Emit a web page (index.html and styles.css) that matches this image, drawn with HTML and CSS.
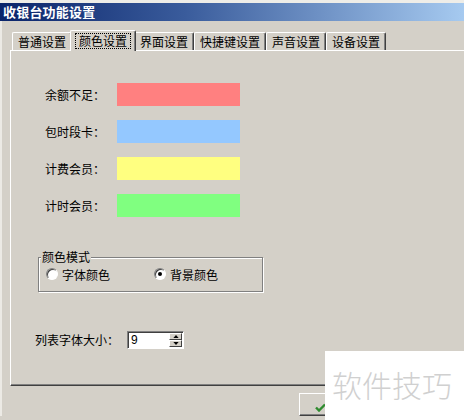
FILE: index.html
```html
<!DOCTYPE html>
<html>
<head>
<meta charset="utf-8">
<link rel="stylesheet" href="styles.css">
</head>
<body>
<div class="window">
  <div class="titlebar"><span class="title">收银台功能设置</span></div>
  <div class="client">
    <div class="tabs">
      <div class="tab">普通设置</div>
      <div class="tab active"><span class="focus">颜色设置</span></div>
      <div class="tab">界面设置</div>
      <div class="tab">快捷键设置</div>
      <div class="tab">声音设置</div>
      <div class="tab">设备设置</div>
    </div>
    <div class="panel">
      <div class="colors">
        <div class="crow"><span class="clabel">余额不足：</span><span class="swatch red"></span></div>
        <div class="crow"><span class="clabel">包时段卡：</span><span class="swatch blue"></span></div>
        <div class="crow"><span class="clabel">计费会员：</span><span class="swatch yellow"></span></div>
        <div class="crow"><span class="clabel">计时会员：</span><span class="swatch green"></span></div>
      </div>
      <div class="group">
        <span class="legend">颜色模式</span>
        <div class="radios">
          <label class="radio first"><span class="circle"></span><span>字体颜色</span></label>
          <label class="radio"><span class="circle checked"><span class="dot"></span></span><span>背景颜色</span></label>
        </div>
      </div>
      <div class="fontrow">
        <span class="flabel">列表字体大小：</span>
        <div class="spin">
          <span class="val">9</span>
          <div class="spinbtns">
            <span class="sbtn"><svg width="7" height="4" viewBox="0 0 7 4"><path d="M3.5 0 L7 4 L0 4 Z" fill="#000"/></svg></span>
            <span class="sbtn"><svg width="7" height="4" viewBox="0 0 7 4"><path d="M0 0 L7 0 L3.5 4 Z" fill="#000"/></svg></span>
          </div>
        </div>
      </div>
    </div>
    <div class="footer">
      <div class="btn">
        <svg class="check" width="11" height="9" viewBox="0 0 11 9"><path d="M1 4.5 L4 7.5 L10 1.5" fill="none" stroke="#2e8b2e" stroke-width="2.4"/></svg>
      </div>
    </div>
  </div>
</div>
<div class="watermark">软件技巧</div>
</body>
</html>
```

FILE: styles.css
```css
html, body {
  margin: 0;
  padding: 0;
}
body {
  width: 464px;
  height: 420px;
  overflow: hidden;
  background: #d4d0c8;
  font-family: "Noto Sans CJK SC", "Liberation Sans", sans-serif;
  font-size: 12px;
  color: #000;
  position: relative;
}
.window {
  border-top: 3px solid #eeede8;
  height: 417px;
}
.titlebar {
  height: 18px;
  background: linear-gradient(to right, #0a246a 0%, #3a5c9c 40%, #a6caf0 100%);
  display: flex;
  align-items: center;
  padding-left: 3px;
}
.title {
  color: #fff;
  font-weight: bold;
  font-size: 13px;
  line-height: 14px;
  letter-spacing: 0.2px;
}
.client {
  box-shadow: inset 2px 0 0 #eceae5;
}
.tabs {
  display: flex;
  padding: 11px 0 0 12px;
  height: 18px;
  position: relative;
  z-index: 2;
}
.tab {
  height: 18px;
  box-sizing: border-box;
  padding: 0 5px;
  border-top: 1px solid #fff;
  border-left: 1px solid #fff;
  border-right: 1px solid #404040;
  box-shadow: inset -1px 0 0 #808080;
  border-radius: 2px 2px 0 0;
  line-height: 16px;
  white-space: nowrap;
  display: flex;
  align-items: center;
}
.tab.active {
  height: 21px;
  margin: -2px -2px 0 -2px;
  padding: 0 4px 0 4px;
  background: #d4d0c8;
  position: relative;
  z-index: 3;
  align-items: flex-start;
  padding-top: 2px;
}
.focus {
  border: 1px dotted #000;
  padding: 0 3px;
  line-height: 14px;
}
.panel {
  margin-left: 10px;
  margin-right: -10px;
  height: 336px;
  box-sizing: border-box;
  border-top: 1px solid #fff;
  border-left: 1px solid #fff;
  border-bottom: 1px solid #404040;
  box-shadow: inset 0 -1px 0 #808080;
  padding: 32px 0 0 0;
}
.colors {
  display: flex;
  flex-direction: column;
  gap: 14px;
}
.crow {
  display: flex;
  align-items: center;
  height: 23px;
  padding-left: 34px;
}
.clabel {
  width: 72px;
  line-height: 14px;
}
.swatch {
  width: 123px;
  height: 23px;
  display: block;
}
.red { background: #ff8080; }
.blue { background: #94c8ff; }
.yellow { background: #ffff80; }
.green { background: #80ff80; }

.group {
  position: relative;
  margin: 40px 0 0 27px;
  width: 225px;
  height: 35px;
  box-sizing: border-box;
  border: 1px solid #808080;
  box-shadow: 1px 1px 0 #fff, inset 1px 1px 0 #fff;
}
.legend {
  position: absolute;
  top: -8px;
  left: 2px;
  padding: 0 1px;
  background: #d4d0c8;
  line-height: 14px;
}
.radios {
  display: flex;
  padding: 8px 0 0 7px;
  height: 16px;
  align-items: center;
}
.radio {
  display: flex;
  align-items: center;
  gap: 4px;
}
.radio.first {
  width: 108px;
}
.circle {
  width: 12px;
  height: 12px;
  box-sizing: border-box;
  border-radius: 50%;
  background: #fff;
  border: 1px solid;
  border-color: #808080 #fff #fff #808080;
  box-shadow: inset 1px 1px 0 #404040;
  display: flex;
  align-items: center;
  justify-content: center;
}
.dot {
  width: 4px;
  height: 4px;
  border-radius: 50%;
  background: #000;
}
.fontrow {
  display: flex;
  align-items: center;
  margin: 39px 0 0 24px;
}
.flabel {
  width: 92px;
  line-height: 14px;
}
.spin {
  width: 57px;
  height: 18px;
  box-sizing: border-box;
  background: #fff;
  border: 1px solid;
  border-color: #808080 #fff #fff #808080;
  box-shadow: inset 1px 1px 0 #404040;
  display: flex;
  justify-content: space-between;
  padding: 1px 1px 0 3px;
}
.val {
  font-family: "Liberation Sans", sans-serif;
  font-size: 12px;
  line-height: 15px;
}
.spinbtns {
  display: flex;
  flex-direction: column;
  width: 13px;
}
.sbtn {
  height: 7px;
  background: #d4d0c8;
  box-sizing: border-box;
  border-top: 1px solid #fff;
  border-left: 1px solid #fff;
  border-right: 1px solid #404040;
  border-bottom: 1px solid #404040;
  display: flex;
  align-items: center;
  justify-content: center;
}
.sbtn svg { display: block; width: 6px; height: 3px; }
.footer {
  padding: 7px 0 0 299px;
}
.btn {
  width: 75px;
  height: 23px;
  box-sizing: border-box;
  border-top: 1px solid #fff;
  border-left: 1px solid #fff;
  border-right: 1px solid #404040;
  border-bottom: 1px solid #404040;
  box-shadow: inset -1px -1px 0 #808080;
  padding: 9px 0 0 15px;
}
.check { display: block; }
.watermark {
  position: absolute;
  left: 325px;
  top: 351px;
  width: 139px;
  height: 69px;
  background: #fff;
  color: #d0d0d0;
  font-size: 30px;
  line-height: 30px;
  padding: 18px 0 0 7px;
  box-sizing: border-box;
  white-space: nowrap;
  font-weight: 300;
}
```
